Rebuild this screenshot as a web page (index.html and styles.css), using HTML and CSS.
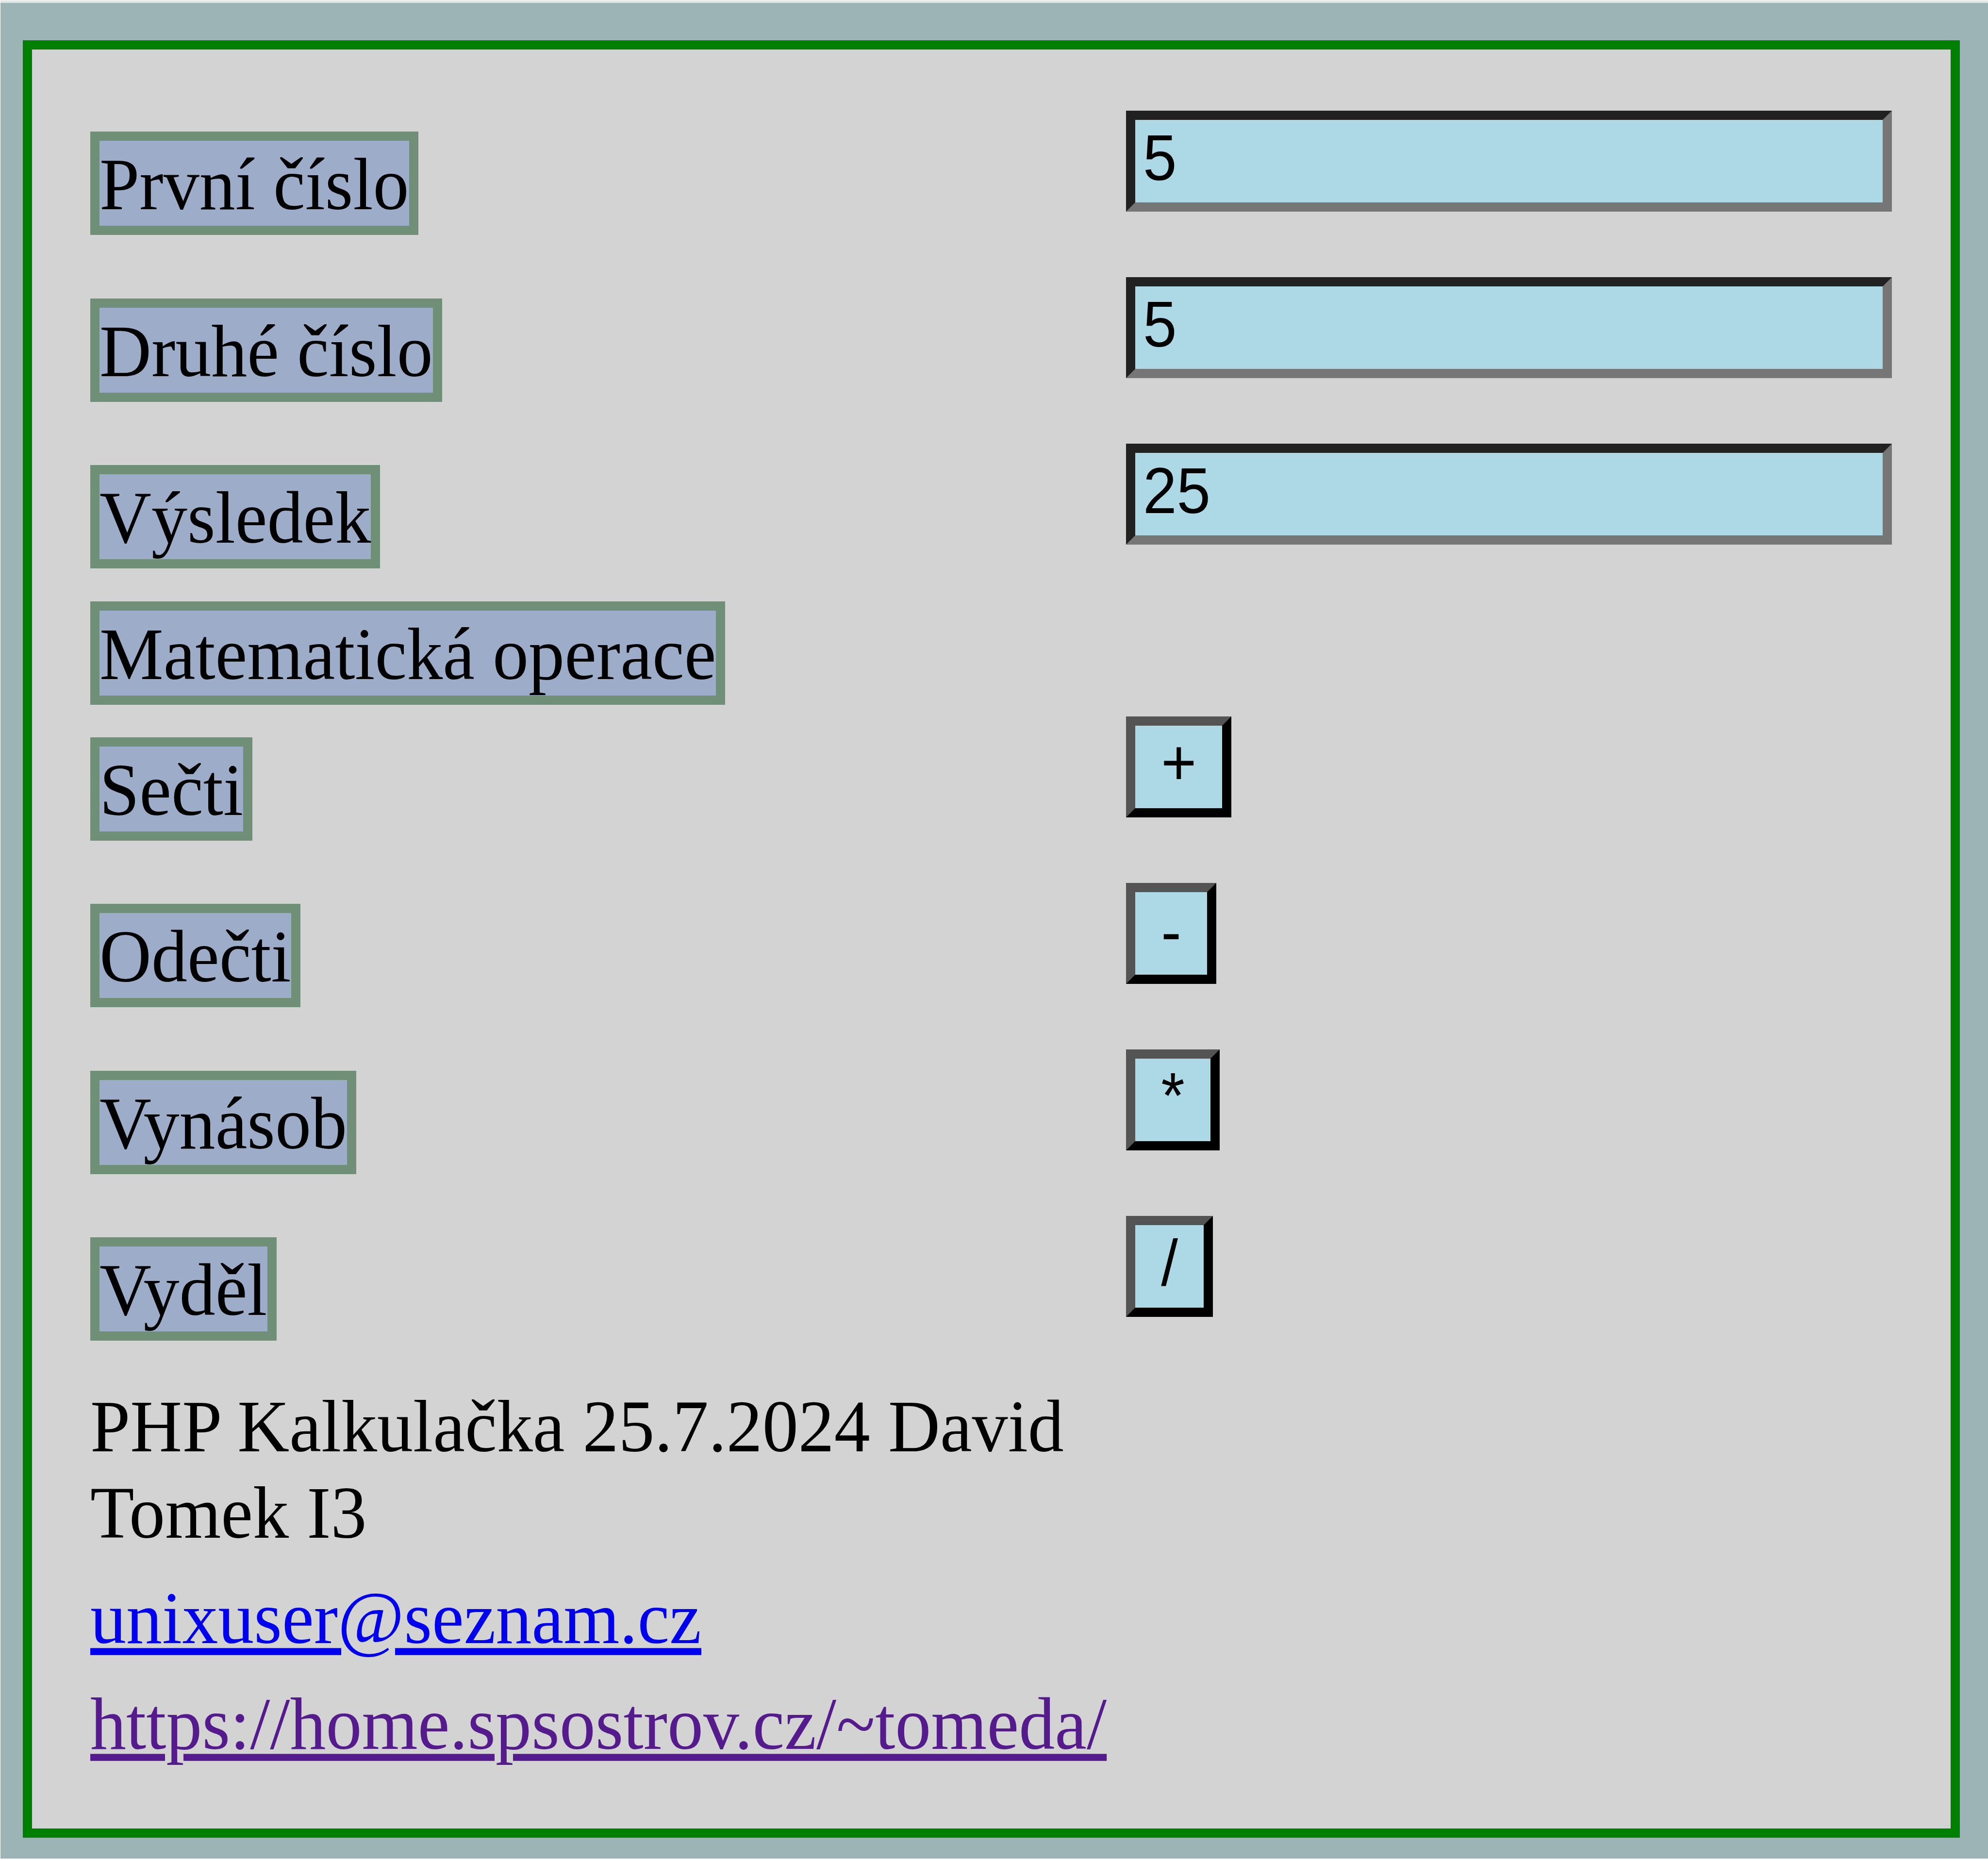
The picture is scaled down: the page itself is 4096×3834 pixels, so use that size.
FILE: index.html
```html
<!DOCTYPE html>
<html lang="cs">
<head>
<meta charset="utf-8">
<title>PHP Kalkulačka</title>
<link rel="stylesheet" href="styles.css">
</head>
<body>
<main class="page">
<form class="calculator">
  <div class="row"><span class="label"><span class="text">První číslo</span></span><div class="field"><span class="text">5</span></div></div>
  <div class="row"><span class="label"><span class="text">Druhé číslo</span></span><div class="field"><span class="text">5</span></div></div>
  <div class="row"><span class="label"><span class="text">Výsledek</span></span><div class="field"><span class="text">25</span></div></div>
  <div class="row row-heading"><span class="label"><span class="text">Matematická operace</span></span></div>
  <div class="row"><span class="label"><span class="text">Sečti</span></span><button type="button" class="op op-plus"><span class="text">+</span></button></div>
  <div class="row"><span class="label"><span class="text">Odečti</span></span><button type="button" class="op op-minus"><span class="text">-</span></button></div>
  <div class="row"><span class="label"><span class="text">Vynásob</span></span><button type="button" class="op op-times"><span class="text">*</span></button></div>
  <div class="row"><span class="label"><span class="text">Vyděl</span></span><button type="button" class="op"><span class="text">/</span></button></div>
  <footer class="footer">
    <div class="text line">PHP Kalkulačka 25.7.2024 David</div>
    <div class="text line">Tomek I3</div>
    <a class="text line mail" href="#mail">unixuser@seznam.cz</a>
    <a class="text line web" href="#web">https://home.spsostrov.cz/~tomeda/</a>
  </footer>
</form>
</main>
</body>
</html>
```

FILE: styles.css
```css
* { box-sizing: border-box; }
html { background: #fff; }
body {
  margin: 0;
  overflow: hidden;
  font-family: "Liberation Serif", "Times New Roman", serif;
  font-size: 148.1px;
  color: #000;
}
.page {
  width: 4095px;
  height: 3828px;
  margin: 1px 0 0 1px;
  padding: 77px 58px 43px 46px;
  border-top: 5px solid #e1e5e1;
  background: #9db4b7;
}
.calculator {
  display: flex;
  flex-direction: column;
  height: 3703px;
  padding: 126px 120px 0;
  border: 19px solid #008000;
  background: #d3d3d3;
}
.row {
  display: grid;
  grid-template-columns: 2134px 1fr;
  align-items: start;
  flex: none;
  height: 343.2px;
}
.row:nth-child(3) { height: 281px; }
.row-heading { height: 280.4px; }
.text {
  display: block;
  white-space: pre;
  transform: scaleY(1.03);
  transform-origin: 0 77%;
}
.label {
  justify-self: start;
  height: 213px;
  margin-top: 43.4px;
  padding-top: 4px;
  border: 19px solid #708f77;
  background: #9dacc8;
  line-height: 174px;
}
.field {
  width: 1578px;
  height: 208px;
  padding: 2px 0 0 16px;
  border: 19px solid;
  border-color: #212121 #767676 #767676 #212121;
  background: #add8e6;
  font: 125px/157px "Liberation Sans", Arial, sans-serif;
}
.field .text,
.op .text {
  transform: scaleY(1.07);
}
.op {
  justify-self: start;
  height: 208px;
  margin: 0;
  padding: 0 53.2px 10px;
  border: 19px solid;
  border-color: #545454 #000 #000 #545454;
  border-radius: 0;
  background: #add8e6;
  color: #000;
  font: 125px/157px "Liberation Sans", Arial, sans-serif;
}
.op-plus { padding-bottom: 18px; }
.op-minus { padding-bottom: 3px; }
.op-times { padding-bottom: 27px; }
.footer {
  display: flex;
  flex-direction: column;
  align-items: flex-start;
  padding-top: 2px;
  line-height: 178.6px;
}
.mail { margin-top: 38px; color: #0000ee; }
.web { margin-top: 40px; color: #551a8b; }
.mail, .web {
  text-decoration: underline;
  text-decoration-thickness: 14px;
  text-underline-offset: 10px;
}
```
